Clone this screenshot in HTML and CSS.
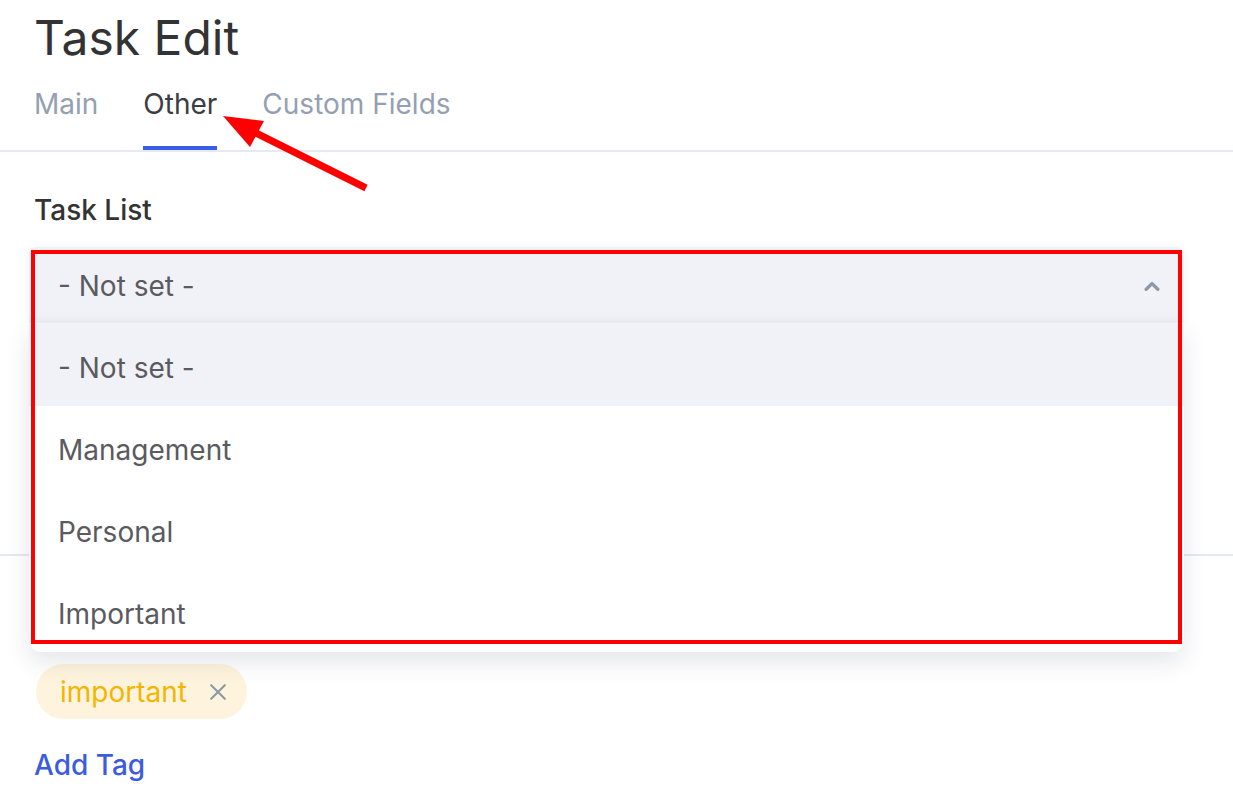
FILE: index.html
```html
<!DOCTYPE html>
<html lang="en">
<head>
    <meta charset="UTF-8">
    <meta name="viewport" content="width=device-width, initial-scale=1.0">
    <title>Task Edit</title>
    <link rel="stylesheet" href="styles.css">
</head>
<body>
    <div class="page">
        <h1 class="title">Task Edit</h1>
        <div class="tabs">
            <a class="tab">Main</a>
            <a class="tab active">Other</a>
            <a class="tab">Custom Fields</a>
        </div>

        <div class="content">
            <div class="field">
                <label class="field-label">Task List</label>
                <div class="dropdown">
                    <div class="select">
                        <span>- Not set -</span>
                        <svg class="chevron" width="16" height="10" viewBox="0 0 16 10">
                            <path d="M2.2 8.3 L8 2.6 L13.8 8.3" fill="none" stroke="#8d99a9" stroke-width="3.4" stroke-linecap="round" stroke-linejoin="round"/>
                        </svg>
                    </div>
                    <ul class="menu">
                        <li class="option selected">- Not set -</li>
                        <li class="option">Management</li>
                        <li class="option">Personal</li>
                        <li class="option">Important</li>
                    </ul>
                </div>
            </div>
        </div>

        <div class="tags-section">
            <div class="tags">
                <span class="tag">
                    important
                    <svg class="tag-remove" width="16" height="16" viewBox="0 0 16 16">
                        <path d="M1.2 1.2 L14.8 14.8 M14.8 1.2 L1.2 14.8" stroke="#8e9aab" stroke-width="2.2" stroke-linecap="round"/>
                    </svg>
                </span>
            </div>
            <a class="add-tag">Add Tag</a>
        </div>
    </div>

    <!-- annotations -->
    <div class="highlight-box"></div>
    <svg class="arrow" width="1233" height="802" viewBox="0 0 1233 802">
        <line x1="366" y1="188" x2="252" y2="131" stroke="#ff0000" stroke-width="7"/>
        <polygon points="223,116 264,121 250,147" fill="#ff0000"/>
    </svg>
</body>
</html>
```

FILE: styles.css
```css
body {
    margin: 0;
    font-family: 'Inter', 'Noto Sans', sans-serif;
    background: #fff;
    color: #333;
}
.page {
    padding-top: 9px;
}
.title {
    margin: 0 0 20px 34px;
    font-size: 48px;
    line-height: 58px;
    font-weight: 400;
    color: #333;
}
.tabs {
    display: flex;
    gap: 45px;
    padding-left: 34px;
    border-bottom: 2px solid #e6e8f2;
}
.tab {
    font-size: 28px;
    line-height: 34px;
    padding-bottom: 25px;
    border-bottom: 4px solid transparent;
    color: #94a0b1;
    cursor: pointer;
}
.tab.active {
    color: #3c3c44;
    border-bottom-color: #3b5ce6;
}
.content {
    padding: 41px 49px 0 34px;
}
.field-label {
    display: block;
    font-size: 28px;
    line-height: 34px;
    font-weight: 500;
    color: #333;
    margin-bottom: 20px;
}
.dropdown {
    position: relative;
    margin-left: -5px;
}
.select {
    display: flex;
    align-items: center;
    justify-content: space-between;
    height: 76px;
    box-sizing: border-box;
    padding: 2px 24px 0 29px;
    background: #f1f2f7;
    border-radius: 8px 8px 0 0;
    box-shadow: 0 0 8px rgba(40, 50, 90, 0.06), inset 0 -4px 4px rgba(40, 50, 90, 0.02);
    font-size: 28px;
    line-height: 34px;
    color: #5a5a60;
}
.menu {
    position: absolute;
    top: 77px;
    left: 0;
    right: 0;
    margin: 0;
    padding: 0;
    list-style: none;
    background: #fff;
    border-radius: 0 0 12px 12px;
    box-shadow: 0 10px 24px rgba(40, 50, 90, 0.12);
    overflow: hidden;
    z-index: 2;
}
.option {
    height: 82px;
    box-sizing: border-box;
    padding: 27px 29px 0;
    font-size: 28px;
    line-height: 34px;
    color: #5a5a60;
}
.option.selected {
    background: #f1f2f7;
}
.tags-section {
    margin-top: 231px;
    border-top: 2px solid #e6e8f2;
    padding: 108px 34px 0;
}
.tag {
    display: inline-flex;
    align-items: center;
    gap: 23px;
    height: 55px;
    padding: 0 21px 0 24px;
    margin-left: 2px;
    border-radius: 28px;
    background: #fef4dd;
    color: #f6b300;
    font-size: 28px;
    line-height: 34px;
}
.add-tag {
    display: block;
    margin-top: 29px;
    font-size: 28px;
    line-height: 34px;
    font-weight: 500;
    color: #3b5ce0;
    cursor: pointer;
}
.highlight-box {
    position: absolute;
    left: 31px;
    top: 250px;
    width: 1151px;
    height: 394px;
    box-sizing: border-box;
    border: 4px solid #ff0000;
    z-index: 5;
}
.arrow {
    position: absolute;
    left: 0;
    top: 0;
    pointer-events: none;
    z-index: 6;
}
```
